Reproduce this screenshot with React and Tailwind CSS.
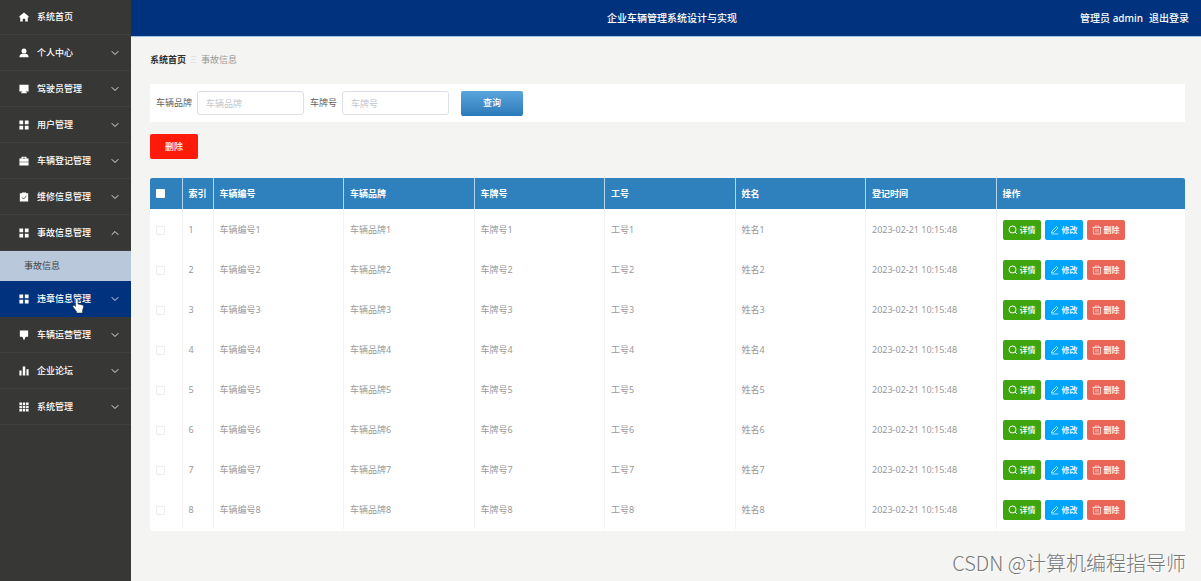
import React, { useState } from "react";
import { FiChevronDown, FiChevronUp } from "react-icons/fi";

const icons = {
  home: <path d="M12 1 1 10v3h2v10h6v-7h6v7h6V13h2v-3z" />,
  user: (
    <>
      <circle cx="12" cy="7" r="6" />
      <path d="M1 22c0-5 3-8 7-8h8c4 0 7 3 7 8z" />
    </>
  ),
  monitor: <path d="M1 2h22v16h-7v2h3v2H5v-2h3v-2H1z" />,
  menu: <path d="M1 1h9v9H1zM14 1h9v9h-9zM1 14h9v9H1zM14 14h9v9h-9z" />,
  briefcase: (
    <>
      <path d="M6 7V2h12v5h-3V4H9v3z" />
      <path d="M1 6h22v8H1zM1 15h22v8H1z" />
    </>
  ),
  clipboard: (
    <>
      <path d="M2 3h5V1h10v2h5v20H2z" />
      <path d="m7 13 4 4 7-8" fill="none" stroke="#373735" strokeWidth="2" />
    </>
  ),
  brush: <path d="M2 1h20v15h-5l-3 3v4h-4v-4l-3-3H2z" />,
  chart: <path d="M1 11h5v12H1zM9 1h6v22H9zM18 8h5v15h-5z" />,
  grid: (
    <path d="M1 1h6v6H1zM9 1h6v6H9zM17 1h6v6h-6zM1 9h6v6H1zM9 9h6v6H9zM17 9h6v6h-6zM1 17h6v6H1zM9 17h6v6H9zM17 17h6v6h-6z" />
  ),
};

const menus = [
  { name: "个人中心", icon: "user" },
  { name: "驾驶员管理", icon: "monitor" },
  { name: "用户管理", icon: "menu" },
  { name: "车辆登记管理", icon: "briefcase" },
  { name: "维修信息管理", icon: "clipboard" },
  { name: "事故信息管理", icon: "menu", children: ["事故信息"] },
  { name: "违章信息管理", icon: "menu", active: true },
  { name: "车辆运营管理", icon: "brush" },
  { name: "企业论坛", icon: "chart" },
  { name: "系统管理", icon: "grid" },
];

const columns = ["车辆编号", "车辆品牌", "车牌号", "工号", "姓名"];
const rows = [1, 2, 3, 4, 5, 6, 7, 8];

function MenuIcon({ name }) {
  return (
    <svg viewBox="0 0 24 24" className="w-[10px] h-[10px] shrink-0 fill-white">
      {icons[name]}
    </svg>
  );
}

function HandCursor() {
  return (
    <svg
      viewBox="0 0 24 32"
      className="absolute left-[72px] top-[17px] w-3 h-4 pointer-events-none"
    >
      <path
        d="M9 1c2 0 3 1 3 3v8l9 2c2 1 2 2 2 4l-2 7v5H9v-3l-7-9c-1-2 1-4 3-3l2 2V4c0-2 1-3 2-3z"
        fill="#fff"
        stroke="#222"
        strokeWidth="1"
      />
    </svg>
  );
}

function Sidebar() {
  const [opened, setOpened] = useState("事故信息管理");

  return (
    <nav className="w-[131px] shrink-0 bg-[#373735] text-white text-[9px] font-medium">
      <a
        href="#home"
        className="flex items-center gap-2 h-[35px] pl-[19px] border-b border-[#40403e]"
      >
        <MenuIcon name="home" />
        系统首页
      </a>
      {menus.map((menu) => {
        const isOpen = opened === menu.name;
        return (
          <div key={menu.name} className="relative">
            <button
              type="button"
              onClick={() => setOpened(isOpen ? "" : menu.name)}
              className={`flex items-center gap-2 w-full h-9 pl-[19px] pr-[10px] border-b ${
                menu.active
                  ? "bg-[#00327e] border-[#00327e]"
                  : "border-[#40403e]"
              }`}
            >
              <MenuIcon name={menu.icon} />
              <span className="flex-1 text-left">{menu.name}</span>
              {isOpen ? (
                <FiChevronUp className="w-3 h-3 text-gray-200" />
              ) : (
                <FiChevronDown className="w-3 h-3 text-gray-200" />
              )}
            </button>
            {menu.active && <HandCursor />}
            {isOpen &&
              menu.children?.map((child) => (
                <a
                  key={child}
                  href="#accident"
                  className="flex items-center h-[30px] pl-6 bg-[#b9c8da] text-[#444] font-normal"
                >
                  {child}
                </a>
              ))}
          </div>
        );
      })}
    </nav>
  );
}

function SearchField({ id, label }) {
  return (
    <div className="flex items-center gap-[5px]">
      <label htmlFor={id} className="text-[#606266]">
        {label}
      </label>
      <input
        id={id}
        type="text"
        placeholder={label}
        className="w-[107px] h-6 px-2 bg-white border border-[#dcdfe6] rounded-[3px] outline-none placeholder:text-[#c3c6cc]"
      />
    </div>
  );
}

function RowButtons() {
  const base =
    "flex items-center justify-center gap-[2px] w-[38px] h-5 rounded-[2px] text-white text-[8px] font-medium whitespace-nowrap";
  const icon = "w-[10px] h-[10px] fill-none stroke-current";

  return (
    <div className="flex items-center gap-1">
      <button type="button" className={`${base} bg-[#3fa50f]`}>
        <svg viewBox="0 0 20 20" className={icon} strokeWidth="2">
          <circle cx="9" cy="9" r="7" />
          <path d="m14 14 4 4" />
        </svg>
        详情
      </button>
      <button type="button" className={`${base} bg-[#00a5fb]`}>
        <svg viewBox="0 0 20 20" className={icon} strokeWidth="1.3">
          <path d="m4 12 9-9 3 3-9 9-4 1zM3 18h14" />
        </svg>
        修改
      </button>
      <button type="button" className={`${base} bg-[#ea6558]`}>
        <svg viewBox="0 0 20 20" className={icon} strokeWidth="1.3">
          <path d="M1 5h18M6 5V2h8v3M3 5v13h14V5M8 8v7M12 8v7" />
        </svg>
        删除
      </button>
    </div>
  );
}

function DataTable() {
  const th = "px-[6px] border-l border-[#b5d6ec] text-left font-bold";
  const td = "px-[6px] pt-[2px] border-l border-[#f3f3f3]";

  return (
    <div className="mt-[19px] pb-[2px] bg-white rounded-t-[2px] overflow-hidden">
      <table className="w-full table-fixed text-[9px] text-[#999]">
        <thead className="bg-[#2e81bd] text-white">
          <tr className="h-[31px]">
            <th className="w-8 pl-[6px] text-left">
              <input
                type="checkbox"
                aria-label="全选"
                className="block appearance-none w-[9px] h-[9px] bg-white rounded-[1px]"
              />
            </th>
            <th className={`${th} w-[31px] whitespace-nowrap`}>索引</th>
            {columns.map((column) => (
              <th key={column} className={th}>
                {column}
              </th>
            ))}
            <th className={th}>登记时间</th>
            <th className={`${th} w-[189px]`}>操作</th>
          </tr>
        </thead>
        <tbody>
          {rows.map((row) => (
            <tr key={row} className="h-10">
              <td className="pl-[6px] pt-[2px]">
                <input
                  type="checkbox"
                  aria-label={`选择${row}`}
                  className="block appearance-none w-[9px] h-[9px] bg-white border border-[#ededed] rounded-[1px]"
                />
              </td>
              <td className={td}>{row}</td>
              {columns.map((column) => (
                <td key={column} className={td}>
                  {column}
                  {row}
                </td>
              ))}
              <td className={`${td} whitespace-nowrap`}>2023-02-21 10:15:48</td>
              <td className={td}>
                <RowButtons />
              </td>
            </tr>
          ))}
        </tbody>
      </table>
    </div>
  );
}

function App() {
  return (
    <div
      lang="zh-CN"
      className="relative flex min-h-screen bg-[#f4f4f2] font-['Noto_Sans','Noto_Sans_CJK_SC',sans-serif] text-[9px] leading-3"
    >
      <Sidebar />

      <div className="flex-1 min-w-0">
        <header className="grid grid-cols-[1fr_auto_1fr] items-center h-[37px] px-3 bg-[#00327e] border-b border-[#9fc3e6] text-white text-[10px] font-medium">
          <h1 className="col-start-2 pl-3">企业车辆管理系统设计与实现</h1>
          <div className="flex justify-end gap-[6px]">
            <span>管理员 admin</span>
            <button type="button">退出登录</button>
          </div>
        </header>

        <main className="pl-[19px] pr-4 pt-[17px]">
          <div className="flex items-center gap-1">
            <a href="#home" className="font-bold text-[#303133]">
              系统首页
            </a>
            <span className="text-[7px] text-[#d5d5d5]">三</span>
            <span className="text-[#999]">事故信息</span>
          </div>

          <form
            onSubmit={(e) => e.preventDefault()}
            className="flex items-center gap-[6px] h-[38px] mt-[18px] px-[6px] bg-white"
          >
            <SearchField id="brand" label="车辆品牌" />
            <SearchField id="plate" label="车牌号" />
            <button
              type="submit"
              className="w-[62px] h-[25px] ml-[6px] rounded-[2px] bg-linear-to-b from-[#5ba5dc] to-[#2a7ab9] text-white font-medium"
            >
              查询
            </button>
          </form>

          <button
            type="button"
            className="block w-12 h-[25px] mt-3 rounded-[2px] bg-[#ff1a0a] text-white font-medium"
          >
            删除
          </button>

          <DataTable />
        </main>
      </div>

      <div className="absolute right-[15px] bottom-[6px] font-['Noto_Sans_CJK_SC',sans-serif] text-[20px] leading-6 font-light text-[#777] [text-shadow:1px_1px_0_#fff] pointer-events-none">
        CSDN @计算机编程指导师
      </div>
    </div>
  );
}

export default App;
